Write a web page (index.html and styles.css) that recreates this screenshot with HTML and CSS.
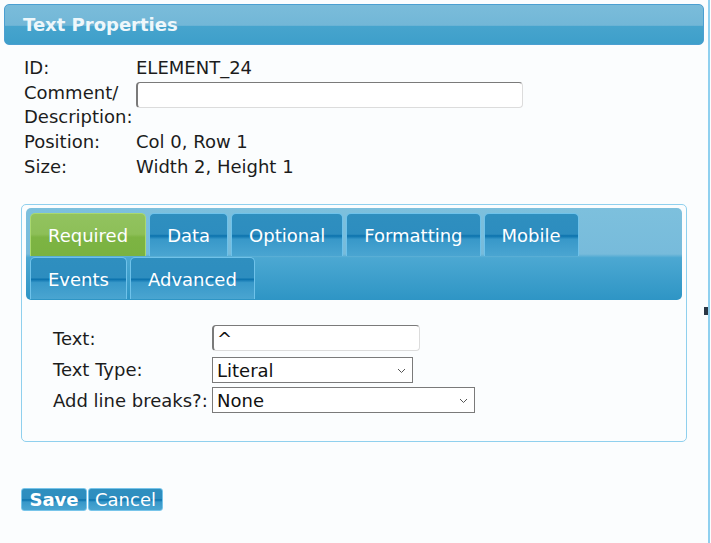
FILE: index.html
```html
<!DOCTYPE html>
<html lang="en">
<head>
    <meta charset="UTF-8">
    <title>Text Properties</title>
    <link rel="stylesheet" href="styles.css">
</head>
<body>

<div class="page">
    <div class="dialog">
        <div class="titlebar">
            <span class="title">Text Properties</span>
        </div>

        <div class="info">
            <div class="lbl">ID:</div>
            <div class="val">ELEMENT_24</div>
            <div class="lbl">Comment/<br>Description:</div>
            <div class="val"><input class="comment" type="text" value=""></div>
            <div class="lbl">Position:</div>
            <div class="val">Col 0, Row 1</div>
            <div class="lbl">Size:</div>
            <div class="val">Width 2, Height 1</div>
        </div>

        <div class="tabs">
            <div class="tabbar">
                <ul class="tabrow">
                    <li class="tab active">Required</li>
                    <li class="tab">Data</li>
                    <li class="tab">Optional</li>
                    <li class="tab">Formatting</li>
                    <li class="tab">Mobile</li>
                </ul>
                <ul class="tabrow">
                    <li class="tab">Events</li>
                    <li class="tab">Advanced</li>
                </ul>
            </div>

            <div class="fields">
                <div class="flbl">Text:</div>
                <div><input class="txt" type="text" value="^"></div>
                <div class="flbl">Text Type:</div>
                <div class="sel sel-type">
                    <span class="selval">Literal</span>
                    <svg class="chev" width="9" height="6" viewBox="0 0 9 6"><path d="M1 1 L4.5 4.5 L8 1" fill="none" stroke="#555" stroke-width="1"/></svg>
                </div>
                <div class="flbl">Add line breaks?:</div>
                <div class="sel sel-breaks">
                    <span class="selval">None</span>
                    <svg class="chev" width="9" height="6" viewBox="0 0 9 6"><path d="M1 1 L4.5 4.5 L8 1" fill="none" stroke="#555" stroke-width="1"/></svg>
                </div>
            </div>
        </div>

        <div class="buttons">
            <button class="btn save">Save</button>
            <button class="btn cancel">Cancel</button>
        </div>
    </div>
    <div class="marker"></div>
</div>

</body>
</html>
```

FILE: styles.css
```css
* {
    box-sizing: border-box;
}

html, body {
    margin: 0;
    padding: 0;
    background: #fbfdfe;
}

body {
    font-family: "DejaVu Sans", Verdana, sans-serif;
    font-size: 18px;
    color: #1c1c1c;
}

ul, li {
    margin: 0;
    padding: 0;
    list-style: none;
}

.page {
    position: relative;
    width: 710px;
    height: 543px;
    border-right: 2px solid #8fd0ef;
    overflow: hidden;
}

.dialog {
    padding: 4px 0 0 4px;
}

.titlebar {
    width: 700px;
    height: 41px;
    border: 1px solid #4b9fd1;
    border-radius: 5px;
    background: linear-gradient(#7abcda 0, #72b7d7 52%, #46a4cd 55%, #3e9fca 100%);
    padding-left: 18px;
    line-height: 40px;
}

.titlebar .title {
    font-weight: bold;
    font-size: 18px;
    color: #eef7fb;
}

.info {
    display: grid;
    grid-template-columns: 112px 400px;
    row-gap: 1px;
    margin: 11px 0 0 20px;
    line-height: 24px;
}

.info .comment {
    display: block;
    width: 387px;
    height: 26px;
    margin-top: 1px;
    border: 1px solid #dcdcdc;
    border-top-color: #7a7a7a;
    border-left: 2px solid #7a7a7a;
    border-radius: 4px;
    background: #fff;
}

.tabs {
    width: 666px;
    height: 238px;
    margin: 25px 0 0 17px;
    padding: 3px 4px 0 4px;
    border: 1px solid #8fd0ee;
    border-radius: 5px;
    background: #fbfdfe;
}

.tabbar {
    height: 92px;
    padding: 5px 4px 1px;
    border-radius: 5px;
    background: linear-gradient(#7dc0dd 0, #77bbdb 50%, #4ca8d2 54%, #2e95c5 100%);
    display: flex;
    flex-direction: column;
    gap: 1px;
}

.tabrow {
    display: flex;
    gap: 3px;
}

.tab {
    height: 43px;
    line-height: 44px;
    padding: 0 17px;
    color: #fff;
    border: 1px solid #6fc2ea;
    border-bottom: 0;
    border-radius: 5px 5px 0 0;
    background: linear-gradient(#2f8fbf 0, #2d8dbf 48%, #0b72ad 52%, #3898c9 60%, #4aa5d1 100%);
}

.tabrow + .tabrow .tab {
    height: 42px;
}

.tab.active {
    border-color: #a9d870;
    background: linear-gradient(#92c35f 0, #8dbf58 48%, #7db443 55%, #7ab241 100%);
}

.fields {
    display: grid;
    grid-template-columns: 159px 300px;
    grid-auto-rows: 26px;
    row-gap: 5px;
    align-items: center;
    padding: 25px 0 0 27px;
}

.fields .txt {
    display: block;
    width: 208px;
    height: 26px;
    padding: 0 3px;
    font: inherit;
    color: #111;
    border: 1px solid #dcdcdc;
    border-top-color: #7a7a7a;
    border-left: 2px solid #7a7a7a;
    border-radius: 4px;
    background: #fff;
}

.sel {
    position: relative;
    height: 26px;
    line-height: 25px;
    padding-left: 4px;
    border: 1px solid #7a7a7a;
    background: #fff;
    color: #111;
}

.sel-type {
    width: 201px;
    margin-top: 2px;
}

.sel-breaks {
    width: 263px;
}

.sel .chev {
    position: absolute;
    right: 6px;
    top: 10px;
}

.buttons {
    display: flex;
    gap: 1px;
    margin: 46px 0 0 17px;
}

.btn {
    height: 23px;
    padding: 0;
    font-family: inherit;
    font-size: 18px;
    line-height: 20px;
    color: #fff;
    border: 1px solid #78c5ea;
    border-radius: 3px;
    background: linear-gradient(#2f8fbf 0, #2d8dbf 45%, #0b72ad 52%, #3898c9 62%, #4aa5d1 100%);
}

.btn.save {
    width: 66px;
    font-weight: bold;
}

.btn.cancel {
    width: 75px;
}

.marker {
    position: absolute;
    right: 0;
    top: 307px;
    width: 4px;
    height: 8px;
    background: #2b3644;
}
```
